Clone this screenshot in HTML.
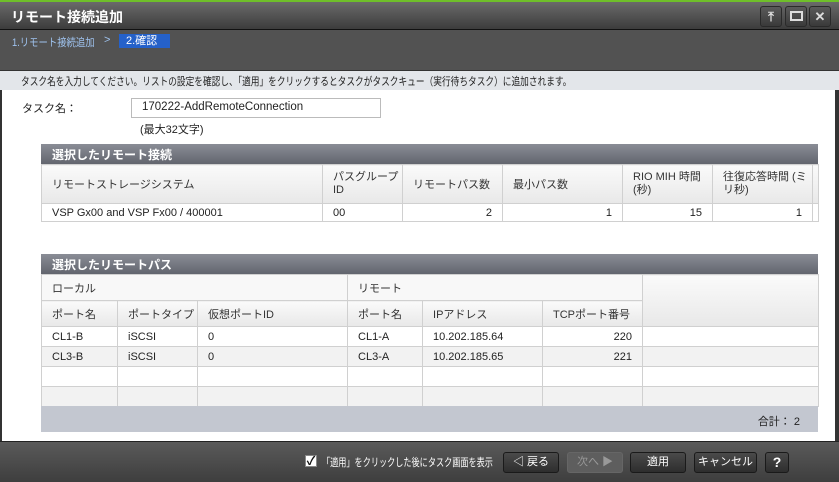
<!DOCTYPE html>
<html><head><meta charset="utf-8"><style>
*{box-sizing:border-box;margin:0;padding:0}
body{width:839px;height:482px;overflow:hidden;background:#fff;font-family:"Liberation Sans","Noto Sans CJK JP",sans-serif;font-size:11px;color:#222;position:relative}
.abs{position:absolute}
.sx{display:inline-block;transform-origin:0 0;white-space:nowrap}
.title{left:0;top:0;width:839px;height:30px;background:linear-gradient(#6a6a6a,#3c3c3c);border-top:2px solid #6fbf2a;border-bottom:1px solid #111}
.title span{position:absolute;left:11px;top:5px;color:#fff;font-weight:bold;font-size:14px}
.wb{top:6px;width:22px;height:21px;border:1px solid #2a2a2a;border-radius:3px;background:linear-gradient(#5a5a5a,#3a3a3a);color:#ddd;text-align:center;font-size:13px;line-height:19px;font-weight:bold}
.crumb{left:0;top:30px;width:839px;height:40px;background:#525252}
.info{left:0;top:70px;width:839px;height:20px;background:#e3e6ea;border-top:1px solid #333}
.rb{left:835px;top:90px;width:4px;height:351px;background:#333}
.lb{left:0;top:90px;width:2px;height:351px;background:#333}
table{border-collapse:collapse;position:absolute;table-layout:fixed}
td{border:1px solid #d0d0d0;padding:0 0 0 10px;white-space:nowrap;overflow:hidden;font-size:11px}
.h td{background:linear-gradient(#fafafa,#e8e8e8);color:#333}
.r{text-align:right;padding-right:10px}
.bar{left:41px;width:777px;height:20px;background:linear-gradient(#8a8d96,#62656e);color:#fff;font-weight:bold;font-size:12px;padding:2px 0 0 11px}
.foot{left:0;top:441px;width:839px;height:41px;background:linear-gradient(#5a5a5a,#3e3e3e);border-top:1px solid #222}
.btn{top:452px;height:21px;border:1px solid #1a1a1a;border-radius:3px;background:linear-gradient(#4a4a4a,#2e2e2e);color:#fff;text-align:center;line-height:19px;font-size:11px}
</style></head><body>
<div class="abs title"><span>リモート接続追加</span></div>
<div class="abs wb" style="left:760px">⤒</div>
<div class="abs wb" style="left:785px"><div style="width:13px;height:10px;border:2px solid #ddd;margin:4px auto"></div></div>
<div class="abs wb" style="left:809px">✕</div>
<div class="abs crumb">
<span class="abs sx" style="left:12px;top:4px;color:#9fc3ef;transform:scaleX(0.85)">1.リモート接続追加</span>
<span class="abs" style="left:104px;top:4px;color:#9fc3ef">&gt;</span>
<span class="abs" style="left:119px;top:4px;width:51px;height:14px;background:#2561c9;color:#fff;padding-left:7px;line-height:14px">2.確認</span>
</div>
<div class="abs info"><span class="abs sx" style="left:21px;top:2px;transform:scaleX(0.79)">タスク名を入力してください。リストの設定を確認し、「適用」をクリックするとタスクがタスクキュー（実行待ちタスク）に追加されます。</span></div>
<div class="abs lb"></div><div class="abs rb"></div>
<span class="abs" style="left:22px;top:100px">タスク名：</span>
<div class="abs" style="left:131px;top:98px;width:250px;height:20px;border:1px solid #bbb;padding:2px 0 0 10px;font-size:11.5px">170222-AddRemoteConnection</div>
<span class="abs" style="left:140px;top:121px">(最大32文字)</span>

<div class="abs bar" style="top:144px">選択したリモート接続</div>
<table style="left:41px;top:164px;width:777px">
<colgroup><col style="width:281px"><col style="width:80px"><col style="width:100px"><col style="width:120px"><col style="width:90px"><col style="width:100px"><col style="width:6px"></colgroup>
<tr class="h" style="height:39px"><td>リモートストレージシステム</td><td style="white-space:normal;line-height:13px">パスグループID</td><td>リモートパス数</td><td>最小パス数</td><td style="white-space:normal;line-height:13px">RIO MIH 時間 (秒)</td><td style="white-space:normal;line-height:13px">往復応答時間 (ミリ秒)</td><td></td></tr>
<tr style="height:18px"><td>VSP Gx00 and VSP Fx00 / 400001</td><td>00</td><td class="r">2</td><td class="r">1</td><td class="r">15</td><td class="r">1</td><td></td></tr>
</table>

<div class="abs bar" style="top:254px">選択したリモートパス</div>
<table style="left:41px;top:274px;width:777px">
<colgroup><col style="width:76px"><col style="width:80px"><col style="width:150px"><col style="width:75px"><col style="width:120px"><col style="width:100px"><col style="width:176px"></colgroup>
<tr class="h" style="height:26px"><td colspan="3" style="background:#f8f8f8">ローカル</td><td colspan="3" style="background:#f8f8f8">リモート</td><td rowspan="2"></td></tr>
<tr class="h" style="height:26px"><td>ポート名</td><td>ポートタイプ</td><td>仮想ポートID</td><td>ポート名</td><td>IPアドレス</td><td>TCPポート番号</td></tr>
<tr style="height:20px"><td>CL1-B</td><td>iSCSI</td><td>0</td><td>CL1-A</td><td>10.202.185.64</td><td class="r">220</td><td></td></tr>
<tr style="height:20px;background:#f2f2f2"><td>CL3-B</td><td>iSCSI</td><td>0</td><td>CL3-A</td><td>10.202.185.65</td><td class="r">221</td><td></td></tr>
<tr style="height:20px"><td></td><td></td><td></td><td></td><td></td><td></td><td></td></tr>
<tr style="height:20px;background:#f2f2f2"><td></td><td></td><td></td><td></td><td></td><td></td><td></td></tr>
</table>
<div class="abs" style="left:41px;top:406px;width:777px;height:26px;background:#c3c7d0"><span class="abs" style="right:18px;top:7px">合計： 2</span></div>

<div class="abs foot"></div>
<div class="abs" style="left:305px;top:455px;width:12px;height:12px;background:#fff;border:1px solid #888;color:#111;font-size:12px;line-height:10px;text-align:center;font-weight:bold">✓</div>
<span class="abs sx" style="left:322px;top:454px;color:#fff;transform:scaleX(0.74)">「適用」をクリックした後にタスク画面を表示</span>
<div class="abs btn" style="left:503px;width:56px">◁ 戻る</div>
<div class="abs btn" style="left:567px;width:56px;background:#5e5e5e;border-color:#666;color:#999">次へ ▶</div>
<div class="abs btn" style="left:630px;width:56px">適用</div>
<div class="abs btn" style="left:694px;width:63px">キャンセル</div>
<div class="abs btn" style="left:765px;width:24px;font-weight:bold;font-size:14px">?</div>
</body></html>
